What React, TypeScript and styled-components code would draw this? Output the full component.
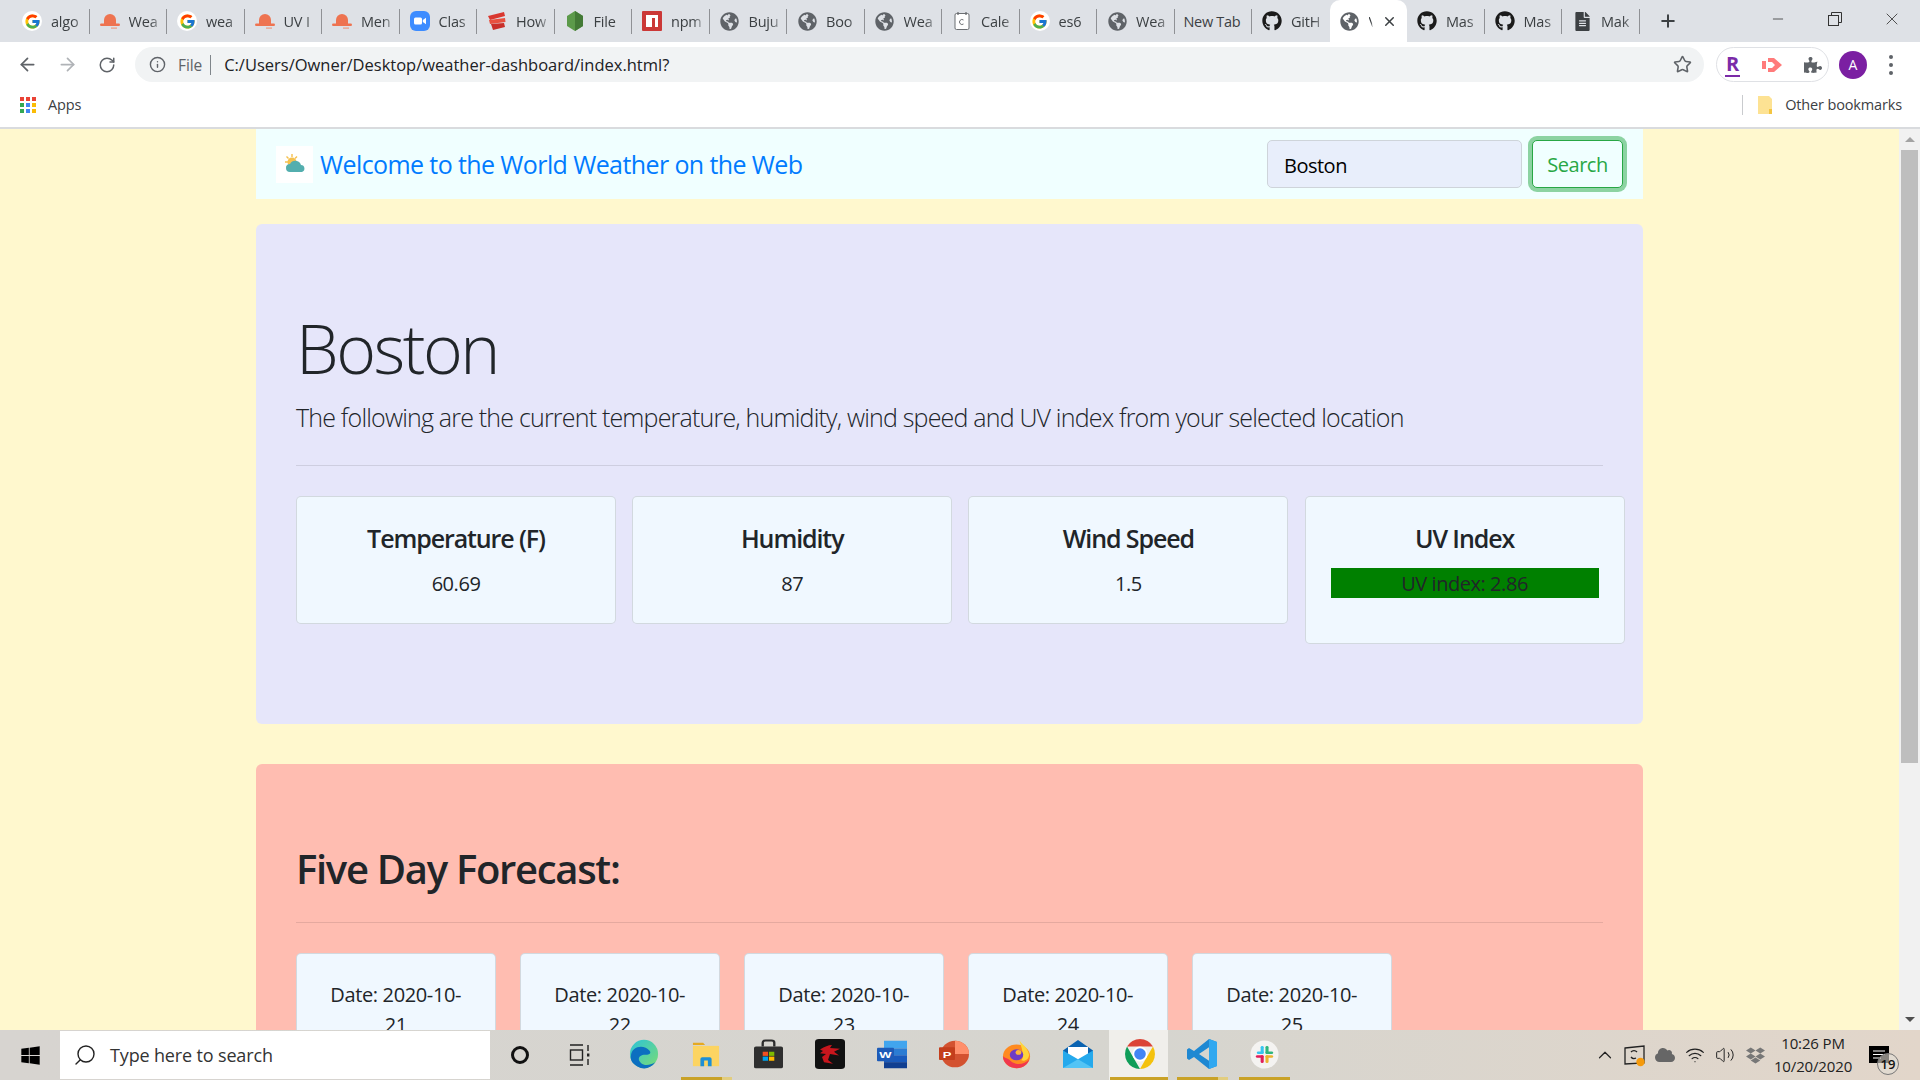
import React from "react";
import styled, { createGlobalStyle } from "styled-components";
import { ArrowLeft, ArrowRight, RotateCw, Star, Info, Plus, Minus, X, ChevronUp, Search as SearchGlyph, Wifi, Volume2 } from "lucide-react";
import { FcGoogle } from "react-icons/fc";
import { FaGithub, FaWindows, FaPuzzlePiece, FaDropbox, FaFileAlt, FaGlobeAmericas, FaCloud } from "react-icons/fa";

const UI = `"Open Sans", "Noto Sans", "Liberation Sans", sans-serif`;

const Global = createGlobalStyle`
  html, body { margin: 0; padding: 0; height: 100%; overflow: hidden; }
  body { font-family: ${UI}; color: #212529; }
  * { box-sizing: border-box; }
`;

const Screen = styled.div`
  width: 1920px; height: 1080px; display: flex; flex-direction: column; overflow: hidden; background: #fff;
`;

/* ---- tab strip ---- */
const TabStrip = styled.div`
  height: 42px; flex: none; background: #dee1e6; display: flex; align-items: stretch; padding-left: 12px;
`;
const Tab = styled.div<{ $active?: boolean; $sep?: boolean }>`
  flex: 0 0 77.5px; width: 77.5px; display: flex; align-items: center; gap: 9px; padding-left: 10px; position: relative;
  background: ${p => (p.$active ? "#fff" : "transparent")};
  border-radius: ${p => (p.$active ? "10px 10px 0 0" : "0")};
  &::after {
    content: ""; position: absolute; right: 0; top: 9px; height: 25px; width: 1px;
    background: ${p => (p.$sep ? "#8f9195" : "transparent")};
  }
`;
const TabIcon = styled.span`
  width: 20px; height: 20px; flex: none; display: flex; align-items: center; justify-content: center;
`;
const TabLabel = styled.span`
  flex: 1; min-width: 0; white-space: nowrap; font-size: 14.5px; color: #3c4043; letter-spacing: -0.2px;
  -webkit-mask-image: linear-gradient(90deg, #000 55%, rgba(0,0,0,0.25) 85%); mask-image: linear-gradient(90deg, #000 55%, rgba(0,0,0,0.25) 85%);
`;
const PlainTabLabel = styled.span`
  font-size: 14.5px; color: #3c4043; white-space: nowrap; letter-spacing: -0.3px; margin-left: -1px;
`;
const TabClose = styled.span`
  display: flex; margin-right: 10px; color: #3c4043;
`;
const NewTab = styled.div`
  width: 56px; display: flex; align-items: center; justify-content: center; color: #3c4043;
`;
const WindowControls = styled.div`
  margin-left: auto; display: flex; align-items: flex-start; padding-top: 10px; color: #333;
`;
const WindowButton = styled.div`
  width: 57px; height: 18px; display: flex; align-items: center; justify-content: center;
`;
const GoogleBadge = styled.span`
  width: 20px; height: 20px; border-radius: 50%; background: #fff; display: flex; align-items: center; justify-content: center;
`;

/* ---- toolbar ---- */
const Toolbar = styled.div`
  height: 42px; flex: none; background: #fff; display: flex; align-items: center; padding: 3px 20px 0 7px;
`;
const NavSlot = styled.div<{ $dim?: boolean }>`
  width: 40px; display: flex; justify-content: center; color: ${p => (p.$dim ? "#b0b3b7" : "#5f6368")};
`;
const AddressBox = styled.div`
  margin-left: 8px; width: 1569px; height: 35px; border-radius: 18px; background: #f1f3f4; display: flex; align-items: center; padding: 0 12px 0 14px;
`;
const SiteInfo = styled.span`
  display: flex; color: #5f6368;
`;
const FileLabel = styled.span`
  font-size: 15.5px; color: #5f6368; margin-left: 12px; padding-right: 8px; border-right: 1px solid #80868b; line-height: 20px; letter-spacing: -0.1px;
`;
const Url = styled.span`
  font-size: 16.5px; color: #202124; margin-left: 13px;
`;
const StarSlot = styled.span`
  margin-left: auto; display: flex; color: #5f6368;
`;
const ExtensionPill = styled.div`
  margin-left: 12px; width: 113px; height: 35px; border: 1px solid #dfe1e5; border-radius: 18px; display: flex; align-items: center; justify-content: center; gap: 16px;
`;
const ExtSlot = styled.span`
  width: 24px; display: flex; justify-content: center; color: #5f6368;
`;
const RakutenR = styled.span`
  font-size: 20px; font-weight: 700; color: #7b2ba8; line-height: 22px; border-bottom: 2px solid #7b2ba8; padding: 0 1px;
`;
const Avatar = styled.div`
  width: 28px; height: 28px; margin-left: 10px; border-radius: 50%; background: #7b1fa2; color: #fff; font-size: 14px; display: flex; align-items: center; justify-content: center;
`;
const MenuDots = styled.div`
  margin-left: 22px; display: flex; flex-direction: column; gap: 4px;
`;
const MenuDot = styled.span`
  width: 4px; height: 4px; border-radius: 50%; background: #5f6368;
`;

/* ---- bookmarks ---- */
const BookmarkBar = styled.div`
  height: 45px; flex: none; background: #fff; border-bottom: 2px solid #d9dbde; display: flex; align-items: center; padding: 0 18px 2px 20px;
`;
const AppsGrid = styled.div`
  display: grid; grid-template-columns: repeat(3, 4px); grid-auto-rows: 4px; gap: 2px;
`;
const AppsDot = styled.span<{ $c: string }>`
  background: ${p => p.$c};
`;
const BookmarkText = styled.span`
  font-size: 14.5px; color: #3c4043; letter-spacing: -0.15px;
`;
const AppsLabel = styled(BookmarkText)`
  margin-left: 12px;
`;
const OtherGroup = styled.div`
  margin-left: auto; display: flex; align-items: center; gap: 12px;
`;
const BarDivider = styled.span`
  width: 1px; height: 20px; background: #c9cbce; margin-right: 2px;
`;

/* ---- page ---- */
const Viewport = styled.div`
  flex: 1; min-height: 0; display: flex; background: #fff8ce; overflow: hidden;
`;
const PageArea = styled.div`
  flex: 1; min-width: 0; overflow: hidden;
`;
const Container = styled.div`
  width: 1387px; margin: 0 auto;
`;
const Navbar = styled.nav`
  height: 70px; background: azure; display: flex; align-items: center; padding: 0 20px; margin-bottom: 25px;
`;
const LogoBox = styled.div`
  width: 37px; height: 37px; background: #fff; display: flex; align-items: center; justify-content: center; margin-right: 7px;
`;
const Brand = styled.a`
  font-size: 25px; color: #007bff; white-space: nowrap; letter-spacing: -0.6px;
`;
const SearchForm = styled.form`
  margin-left: auto; display: flex; gap: 10px;
`;
const SearchInput = styled.div`
  width: 255px; height: 48px; border: 1px solid #ced4da; border-radius: 5px; background: #e8eefb; color: #000; font-size: 20px; padding: 3px 16px 0; display: flex; align-items: center; letter-spacing: -0.5px;
`;
const SearchButton = styled.button`
  width: 91px; height: 48px; border: 1px solid #28a745; border-radius: 5px; background: azure; color: #28a745; font: inherit; font-size: 20px; padding: 0; box-shadow: 0 0 0 4px rgba(40, 167, 69, 0.5); letter-spacing: -0.5px;
`;
const Jumbotron = styled.section<{ $bg: string }>`
  background: ${p => p.$bg}; border-radius: 6px; padding: 80px 40px; margin-bottom: 40px;
`;
const CityName = styled.h1`
  font-size: 68px; font-weight: 300; line-height: 88px; margin: 0 0 7px; letter-spacing: -2.5px;
`;
const Lead = styled.p`
  font-size: 25px; font-weight: 300; line-height: 37px; margin: 0 0 -1px; letter-spacing: -0.81px; white-space: nowrap;
`;
const Rule = styled.hr`
  border: 0; border-top: 1px solid rgba(0, 0, 0, 0.1); margin: 30px 0;
`;
const CardRow = styled.div<{ $gap: number }>`
  display: flex; align-items: flex-start; gap: ${p => p.$gap}px;
`;
const Card = styled.div<{ $w: number }>`
  flex: 0 0 ${p => p.$w}px; width: ${p => p.$w}px; background: aliceblue; border: 1px solid rgba(0, 0, 0, 0.125); border-radius: 5px; padding: 26px 25px 25px; text-align: center;
`;
const CardTitle = styled.h5`
  font-size: 25px; font-weight: 600; line-height: 30px; margin: 0 0 15px; white-space: nowrap; letter-spacing: -1.1px;
`;
const CardText = styled.p`
  font-size: 20px; line-height: 32px; height: 30px; margin: 0; letter-spacing: -0.45px;
`;
const DateText = styled.p`
  font-size: 20px; line-height: 30px; margin: 0; letter-spacing: -0.36px;
`;
const UvText = styled(CardText)`
  background: #008000; margin-bottom: 20px;
`;
const ForecastTitle = styled.h2`
  font-size: 40px; font-weight: 600; line-height: 50px; margin: 0 0 -2px; letter-spacing: -1.3px;
`;

/* ---- scrollbar ---- */
const ScrollTrack = styled.div`
  flex: 0 0 21px; background: #f1f1f1; display: flex; flex-direction: column; align-items: center;
`;
const ScrollArrow = styled.div<{ $down?: boolean }>`
  height: 21px; flex: none; display: flex; align-items: center; justify-content: center;
  &::before {
    content: ""; border-left: 5px solid transparent; border-right: 5px solid transparent;
    ${p => (p.$down ? "border-top: 5px solid #505050;" : "border-bottom: 5px solid #a3a3a3;")}
  }
`;
const ScrollThumb = styled.div`
  width: 17px; height: 613px; background: #bebebe; margin-bottom: auto;
`;

/* ---- taskbar ---- */
const Taskbar = styled.div`
  height: 50px; flex: none; display: flex; align-items: center; background: linear-gradient(90deg, #d7d4d0, #d6d5cf 60%, #e2d6ca);
`;
const StartButton = styled.div`
  width: 60px; display: flex; justify-content: center; color: #000;
`;
const SearchBox = styled.div`
  width: 430px; height: 48px; background: #fff; display: flex; align-items: center; padding-left: 13px; gap: 13px; color: #222;
`;
const SearchHint = styled.span`
  font-size: 18px; color: #333; letter-spacing: -0.15px;
`;
const SystemSlot = styled.div`
  width: 60px; display: flex; justify-content: center;
`;
const Ring = styled.span`
  width: 18px; height: 18px; border: 3px solid #111; border-radius: 50%;
`;
const AppStrip = styled.div`
  display: flex; margin-left: 3px; height: 100%;
`;
const AppSlot = styled.div<{ $active?: boolean; $running?: boolean; $tail?: boolean }>`
  width: 62px; height: 100%; display: flex; align-items: center; justify-content: center; position: relative; padding-bottom: 2px;
  background: ${p => (p.$active ? "#f0efeb" : "transparent")};
  box-shadow: ${p => (p.$active ? "inset -3px 0 0 #d6d5cf" : "none")};
  &::after {
    content: ""; position: absolute; left: ${p => (p.$active ? "1px" : "6px")}; right: ${p => (p.$active ? "3px" : "5px")}; bottom: 0; height: 3px;
    background: ${p => (p.$running ? (p.$tail ? "linear-gradient(90deg, #c9a227 80%, #e2cd7f 80%)" : "#c9a227") : "transparent")};
  }
`;
const Tray = styled.div`
  margin-left: auto; display: flex; align-items: center; padding-right: 16px; height: 100%;
`;
const TrayItem = styled.div`
  width: 30px; display: flex; justify-content: center; color: #222;
`;
const Clock = styled.div`
  width: 84px; text-align: center; font-size: 15px; line-height: 23px; color: #222; letter-spacing: -0.15px; padding-left: 2px;
`;
const Notify = styled.div`
  width: 50px; height: 100%; display: flex; align-items: center; justify-content: center; position: relative;
`;
const NotifyBadge = styled.span`
  position: absolute; left: 23px; top: 23px; width: 22px; height: 22px; border-radius: 50%; border: 1px solid #777; background: rgba(225, 220, 212, 0.6); font-size: 13px; font-weight: 600; display: flex; align-items: center; justify-content: center; color: #111;
`;

/* ---- icons ---- */
const Google = () => <GoogleBadge><FcGoogle size={17} /></GoogleBadge>;
const Globe = () => <FaGlobeAmericas size={19} color="#5f6368" />;
const Octocat = () => <FaGithub size={20} color="#1b1b1b" />;
const Weather = () => (
  <svg width="20" height="20" viewBox="0 0 20 20">
    <path d="M4 13V9a6 6 0 0 1 12 0v4z" fill="#ee7350" />
    <rect x="0" y="12.5" width="20" height="2.6" rx="1.3" fill="#ee7350" />
    <rect x="11" y="16.5" width="6" height="1.2" fill="#ee9a80" />
  </svg>
);
const Zoom = () => (
  <svg width="20" height="20" viewBox="0 0 20 20">
    <rect width="20" height="20" rx="6" fill="#3d8cff" />
    <rect x="4" y="6.5" width="8" height="7" rx="1.5" fill="#fff" />
    <path d="M12.8 9 16 6.8v6.4L12.8 11z" fill="#fff" />
  </svg>
);
const Stack = () => (
  <svg width="20" height="20" viewBox="0 0 20 20">
    <path d="M1 5 17 1l1 4L3 9z" fill="#d9372f" />
    <path d="M2 9 18 7l.5 4L3 13z" fill="#e8503f" />
    <path d="M4 13l13-1 1 4-12 3z" fill="#c92f2a" />
  </svg>
);
const NodeHex = () => (
  <svg width="20" height="20" viewBox="0 0 20 20">
    <path d="M10 0 18 5v10l-8 5-8-5V5z" fill="#5c9a4a" />
    <path d="M10 0 18 5v10l-8 5z" fill="#437a36" />
  </svg>
);
const Npm = () => (
  <svg width="20" height="20" viewBox="0 0 20 20">
    <rect width="20" height="20" rx="1" fill="#cb3837" />
    <path d="M4 4h12v12h-3V7h-3v9H4z" fill="#fff" />
  </svg>
);
const CalIcon = () => (
  <svg width="20" height="20" viewBox="0 0 20 20" fill="none" stroke="#6b6e72">
    <rect x="3" y="2.5" width="14" height="16" rx="1.5" fill="#fff" />
    <path d="M6 1v3M14 1v3" strokeWidth="1.3" />
    <path d="M11.5 9a2.5 2.5 0 1 0 0 4" />
  </svg>
);
const SunCloud = () => (
  <svg width="24" height="20" viewBox="0 0 24 20">
    <circle cx="9" cy="8" r="4.5" fill="#f5c04e" />
    <path d="M9 0v3M2 8h3M3.5 2.5l2 2M14 2.5l-2 2M3.5 13.5l2-2" stroke="#f5c04e" strokeWidth="1.4" />
    <path d="M7 18a4 4 0 0 1 0-8 6 6 0 0 1 11 1 3.6 3.6 0 0 1 1 7z" fill="#53aeae" />
  </svg>
);
const RestoreIcon = () => (
  <svg width="14" height="14" viewBox="0 0 14 14" fill="none" stroke="#333">
    <rect x="0.5" y="3.5" width="10" height="10" />
    <path d="M3.5 3.5v-3h10v10h-3" />
  </svg>
);
const Pointer = () => (
  <svg width="22" height="20" viewBox="0 0 22 20" fill="#ff7b7b">
    <rect x="0" y="6" width="4" height="8" />
    <path d="M6 3h6l8 7-8 7H6v-4h4l3-3-3-3H6z" />
  </svg>
);
const Folder = () => (
  <svg width="16" height="20" viewBox="0 0 16 20">
    <path d="M1 1h11l3 3v15H1z" fill="#fde293" />
    <rect x="12" y="14" width="3" height="5" fill="#f4c542" />
  </svg>
);
const Edge = () => (
  <svg width="30" height="30" viewBox="0 0 32 36" preserveAspectRatio="none">
    <defs>
      <linearGradient id="edgeA" x1="0" y1="0" x2="1" y2="1"><stop offset="0" stopColor="#2cc3d8" /><stop offset="1" stopColor="#7bdc74" /></linearGradient>
    </defs>
    <ellipse cx="16" cy="18" rx="15" ry="17" fill="url(#edgeA)" />
    <path d="M2 20C3 8 16 6 22 14c2 3 0 5-5 5-6 0-9 5-4 10 3 3 9 3 15-1-5 8-13 9-19 5C4 30 1 25 2 20z" fill="#0c6fc0" />
  </svg>
);
const Explorer = () => (
  <svg width="28" height="26" viewBox="0 0 30 32" preserveAspectRatio="none">
    <path d="M1 2h11l2 3H1z" fill="#e5a921" />
    <rect x="1" y="6" width="28" height="25" fill="#fcd462" />
    <path d="M9 31v-9a2 2 0 0 1 2-2h8a2 2 0 0 1 2 2v9h-4v-7h-4v7z" fill="#1d8fd6" />
  </svg>
);
const Store = () => (
  <svg width="29" height="30" viewBox="0 0 30 40" preserveAspectRatio="none">
    <path d="M9 10V5a3 3 0 0 1 3-3h6a3 3 0 0 1 3 3v5" fill="none" stroke="#2c2c2c" strokeWidth="2.4" />
    <rect y="10" width="30" height="29" rx="2" fill="#2f2f2f" />
    <rect x="9" y="17" width="5.5" height="5.5" fill="#f25022" />
    <rect x="15.5" y="17" width="5.5" height="5.5" fill="#7fba00" />
    <rect x="9" y="23.5" width="5.5" height="5.5" fill="#00a4ef" />
    <rect x="15.5" y="23.5" width="5.5" height="5.5" fill="#ffb900" />
  </svg>
);
const Msi = () => (
  <svg width="30" height="30" viewBox="0 0 30 40" preserveAspectRatio="none">
    <rect width="30" height="40" rx="4" fill="#111" />
    <path d="M5 14c5-4 8-6 12-6l-2 4 10 1-6 4 5 5-9-2-2 8 5 5-9-2-2-7 4-4-6-1 3-3z" fill="#c8161d" />
  </svg>
);
const Word = () => (
  <svg width="30" height="29" viewBox="0 0 30 38" preserveAspectRatio="none">
    <rect x="7" y="1" width="23" height="10" fill="#41a5ee" />
    <rect x="7" y="11" width="23" height="9" fill="#2b7cd3" />
    <rect x="7" y="20" width="23" height="9" fill="#185abd" />
    <rect x="7" y="29" width="23" height="8" fill="#103f91" />
    <rect y="10" width="17" height="18" rx="1" fill="#1d5bb8" />
    <text x="8.5" y="24" textAnchor="middle" fontSize="13" fontWeight="700" fill="#fff" fontFamily="Liberation Sans">W</text>
  </svg>
);
const Ppt = () => (
  <svg width="30" height="28" viewBox="0 0 30 38" preserveAspectRatio="none">
    <ellipse cx="16" cy="19" rx="14" ry="18" fill="#d35230" />
    <path d="M16 1a14 18 0 0 1 14 18H16z" fill="#ff8f6b" />
    <rect y="10" width="16" height="17" rx="1" fill="#c43e1c" />
    <text x="8" y="24" textAnchor="middle" fontSize="13" fontWeight="700" fill="#fff" fontFamily="Liberation Sans">P</text>
  </svg>
);
const Firefox = () => (
  <svg width="29" height="30" viewBox="0 0 30 38" preserveAspectRatio="none">
    <ellipse cx="15" cy="22" rx="14" ry="15" fill="#ff8a1f" />
    <path d="M18 1c1 5 9 9 10 19 0 6-5 9-8 7 4-6 0-15-2-26z" fill="#ffd43a" />
    <path d="M1 22c0 9 7 15 14 15s12-5 13-11c-4 6-14 8-19 2-2-3-5-3-8-6z" fill="#f0384e" />
    <circle cx="15" cy="20" r="7" fill="#6e3cc6" />
    <circle cx="17" cy="17" r="3" fill="#ffb43a" />
  </svg>
);
const Mail = () => (
  <svg width="30" height="28" viewBox="0 0 30 32" preserveAspectRatio="none">
    <path d="M0 12 15 0l15 12v5H0z" fill="#0a63b1" />
    <path d="M5 8h20v9l-10 6-10-6z" fill="#fff" />
    <path d="M0 12l15 10 15-10v20H0z" fill="#25a9ec" />
    <path d="M0 32l15-10 15 10z" fill="#53c4f5" />
  </svg>
);
const ChromeLogo = () => (
  <svg width="30" height="30" viewBox="2 2 28 28">
    <path d="M3.9 9A14 14 0 0 1 28.1 9L16 9z" fill="#db4437" />
    <path d="M28.1 9A14 14 0 0 1 16 30l6-10.5z" fill="#f4c20d" />
    <path d="M16 30A14 14 0 0 1 3.9 9l6 10.5z" fill="#0f9d58" />
    <circle cx="16" cy="16" r="7" fill="#fff" />
    <circle cx="16" cy="16" r="5.4" fill="#4285f4" />
  </svg>
);
const VsCode = () => (
  <svg width="30" height="30" viewBox="0 0 30 40" preserveAspectRatio="none">
    <path d="M22 0l8 4v32l-8 4L7 24l-5 4-2-2v-12l2-2 5 4zM22 11 12 20l10 9z" fill="#1e88d2" />
    <path d="M22 0l8 4v32l-8 4z" fill="#31a8f0" />
  </svg>
);
const Slack = () => (
  <svg width="29" height="29" viewBox="0 0 30 38" preserveAspectRatio="none">
    <ellipse cx="15" cy="19" rx="14.5" ry="18.5" fill="#f4f3f1" />
    <rect x="11" y="8" width="3.2" height="10" rx="1.6" fill="#36c5f0" />
    <rect x="7" y="15" width="7.2" height="3.2" rx="1.6" fill="#36c5f0" />
    <rect x="16" y="8" width="3.2" height="10" rx="1.6" fill="#2eb67d" />
    <rect x="16" y="15" width="8" height="3.2" rx="1.6" fill="#2eb67d" />
    <rect x="16" y="20" width="3.2" height="10" rx="1.6" fill="#ecb22e" />
    <rect x="16" y="20" width="8" height="3.2" rx="1.6" fill="#ecb22e" />
    <rect x="11" y="20" width="3.2" height="10" rx="1.6" fill="#e01e5a" />
    <rect x="6" y="20" width="8" height="3.2" rx="1.6" fill="#e01e5a" />
  </svg>
);
const TaskView = () => (
  <svg width="22" height="24" viewBox="0 0 22 24" fill="none" stroke="#222" strokeWidth="1.4">
    <path d="M1 2h13M1 22h13" />
    <rect x="1.5" y="7" width="12" height="10" />
    <path d="M19 2v6M19 16v6" />
    <rect x="18" y="10.5" width="2.4" height="3" fill="#222" stroke="none" />
  </svg>
);
const TrayDevice = () => (
  <svg width="24" height="24" viewBox="0 0 24 24" fill="none" stroke="#222" strokeWidth="1.3">
    <path d="M2 5l19-2v17l-19 1z" />
    <path d="M14 9a4 4 0 0 0-6 0M8 14a4 4 0 0 0 5 1" />
    <circle cx="17.5" cy="19" r="4.2" fill="#f59a0c" stroke="none" />
  </svg>
);
const ActionCenter = () => (
  <svg width="20" height="18" viewBox="0 0 20 18">
    <rect width="20" height="17" fill="#000" />
    <path d="M4 5h12M4 8.5h12M4 12h8" stroke="#fff" strokeWidth="1.2" />
  </svg>
);

type TabDef = { icon: React.ReactNode; label: string };
const tabs: TabDef[] = [
  { icon: <Google />, label: "algo" },
  { icon: <Weather />, label: "Wea" },
  { icon: <Google />, label: "wea" },
  { icon: <Weather />, label: "UV I" },
  { icon: <Weather />, label: "Men" },
  { icon: <Zoom />, label: "Clas" },
  { icon: <Stack />, label: "How" },
  { icon: <NodeHex />, label: "File" },
  { icon: <Npm />, label: "npm" },
  { icon: <Globe />, label: "Buju" },
  { icon: <Globe />, label: "Boo" },
  { icon: <Globe />, label: "Wea" },
  { icon: <CalIcon />, label: "Cale" },
  { icon: <Google />, label: "es6" },
  { icon: <Globe />, label: "Wea" },
];
const afterTabs: TabDef[] = [
  { icon: <Octocat />, label: "Mas" },
  { icon: <Octocat />, label: "Mas" },
  { icon: <FaFileAlt size={19} color="#3c4043" />, label: "Mak" },
];

const appColors = ["#ea4335", "#ea4335", "#ea4335", "#34a853", "#4285f4", "#fbbc05", "#34a853", "#4285f4", "#fbbc05"];

const overview = [
  { title: "Temperature (F)", value: "60.69" },
  { title: "Humidity", value: "87" },
  { title: "Wind Speed", value: "1.5" },
];
const forecast = ["21", "22", "23", "24", "25"];

const taskApps = [
  { key: "edge", node: <Edge /> },
  { key: "explorer", node: <Explorer />, running: true, tail: true },
  { key: "store", node: <Store /> },
  { key: "msi", node: <Msi /> },
  { key: "word", node: <Word /> },
  { key: "ppt", node: <Ppt /> },
  { key: "firefox", node: <Firefox /> },
  { key: "mail", node: <Mail /> },
  { key: "chrome", node: <ChromeLogo />, running: true, active: true },
  { key: "vscode", node: <VsCode />, running: true, tail: true },
  { key: "slack", node: <Slack />, running: true },
];

export default function App() {
  return (
    <Screen>
      <Global />
      <TabStrip>
        {tabs.map((t, i) => (
          <Tab key={i} $sep>
            <TabIcon>{t.icon}</TabIcon>
            <TabLabel>{t.label}</TabLabel>
          </Tab>
        ))}
        <Tab $sep><PlainTabLabel>New Tab</PlainTabLabel></Tab>
        <Tab><TabIcon><Octocat /></TabIcon><TabLabel>GitH</TabLabel></Tab>
        <Tab $active>
          <TabIcon><Globe /></TabIcon>
          <TabLabel>V</TabLabel>
          <TabClose><X size={15} strokeWidth={2.4} /></TabClose>
        </Tab>
        {afterTabs.map((t, i) => (
          <Tab key={i} $sep>
            <TabIcon>{t.icon}</TabIcon>
            <TabLabel>{t.label}</TabLabel>
          </Tab>
        ))}
        <NewTab><Plus size={20} strokeWidth={2.4} /></NewTab>
        <WindowControls>
          <WindowButton><Minus size={16} strokeWidth={1.2} /></WindowButton>
          <WindowButton><RestoreIcon /></WindowButton>
          <WindowButton><X size={20} strokeWidth={1} /></WindowButton>
        </WindowControls>
      </TabStrip>

      <Toolbar>
        <NavSlot><ArrowLeft size={21} /></NavSlot>
        <NavSlot $dim><ArrowRight size={21} /></NavSlot>
        <NavSlot><RotateCw size={18} /></NavSlot>
        <AddressBox>
          <SiteInfo><Info size={17} /></SiteInfo>
          <FileLabel>File</FileLabel>
          <Url>C:/Users/Owner/Desktop/weather-dashboard/index.html?</Url>
          <StarSlot><Star size={19} /></StarSlot>
        </AddressBox>
        <ExtensionPill>
          <ExtSlot><RakutenR>R</RakutenR></ExtSlot>
          <ExtSlot><Pointer /></ExtSlot>
          <ExtSlot><FaPuzzlePiece size={18} /></ExtSlot>
        </ExtensionPill>
        <Avatar>A</Avatar>
        <MenuDots><MenuDot /><MenuDot /><MenuDot /></MenuDots>
      </Toolbar>

      <BookmarkBar>
        <AppsGrid>{appColors.map((c, i) => <AppsDot key={i} $c={c} />)}</AppsGrid>
        <AppsLabel>Apps</AppsLabel>
        <OtherGroup>
          <BarDivider />
          <Folder />
          <BookmarkText>Other bookmarks</BookmarkText>
        </OtherGroup>
      </BookmarkBar>

      <Viewport>
        <PageArea>
          <Container>
            <Navbar>
              <LogoBox><SunCloud /></LogoBox>
              <Brand>Welcome to the World Weather on the Web</Brand>
              <SearchForm>
                <SearchInput>Boston</SearchInput>
                <SearchButton type="button">Search</SearchButton>
              </SearchForm>
            </Navbar>
            <Jumbotron $bg="lavender">
              <CityName>Boston</CityName>
              <Lead>The following are the current temperature, humidity, wind speed and UV index from your selected location</Lead>
              <Rule />
              <CardRow $gap={16.2}>
                {overview.map(o => (
                  <Card key={o.title} $w={320}>
                    <CardTitle>{o.title}</CardTitle>
                    <CardText>{o.value}</CardText>
                  </Card>
                ))}
                <Card $w={320}>
                  <CardTitle>UV Index</CardTitle>
                  <UvText>UV index: 2.86</UvText>
                </Card>
              </CardRow>
            </Jumbotron>
            <Jumbotron $bg="#ffbdb1">
              <ForecastTitle>Five Day Forecast:</ForecastTitle>
              <Rule />
              <CardRow $gap={24.5}>
                {forecast.map(d => (
                  <Card key={d} $w={199.5}>
                    <DateText>Date: 2020-10-{d}</DateText>
                  </Card>
                ))}
              </CardRow>
            </Jumbotron>
          </Container>
        </PageArea>
        <ScrollTrack>
          <ScrollArrow />
          <ScrollThumb />
          <ScrollArrow $down />
        </ScrollTrack>
      </Viewport>

      <Taskbar>
        <StartButton><FaWindows size={21} /></StartButton>
        <SearchBox>
          <SearchGlyph size={24} strokeWidth={1.4} style={{ transform: "scaleX(-1)" }} />
          <SearchHint>Type here to search</SearchHint>
        </SearchBox>
        <SystemSlot><Ring /></SystemSlot>
        <SystemSlot><TaskView /></SystemSlot>
        <AppStrip>
          {taskApps.map(a => (
            <AppSlot key={a.key} $active={a.active} $running={a.running} $tail={a.tail}>{a.node}</AppSlot>
          ))}
        </AppStrip>
        <Tray>
          <TrayItem><ChevronUp size={22} strokeWidth={1.3} /></TrayItem>
          <TrayItem><TrayDevice /></TrayItem>
          <TrayItem><FaCloud size={20} color="#666" /></TrayItem>
          <TrayItem><Wifi size={20} strokeWidth={1.4} /></TrayItem>
          <TrayItem><Volume2 size={20} strokeWidth={1.2} /></TrayItem>
          <TrayItem><FaDropbox size={19} color="#777" /></TrayItem>
          <Clock>10:26 PM<br />10/20/2020</Clock>
          <Notify>
            <ActionCenter />
            <NotifyBadge>19</NotifyBadge>
          </Notify>
        </Tray>
      </Taskbar>
    </Screen>
  );
}
